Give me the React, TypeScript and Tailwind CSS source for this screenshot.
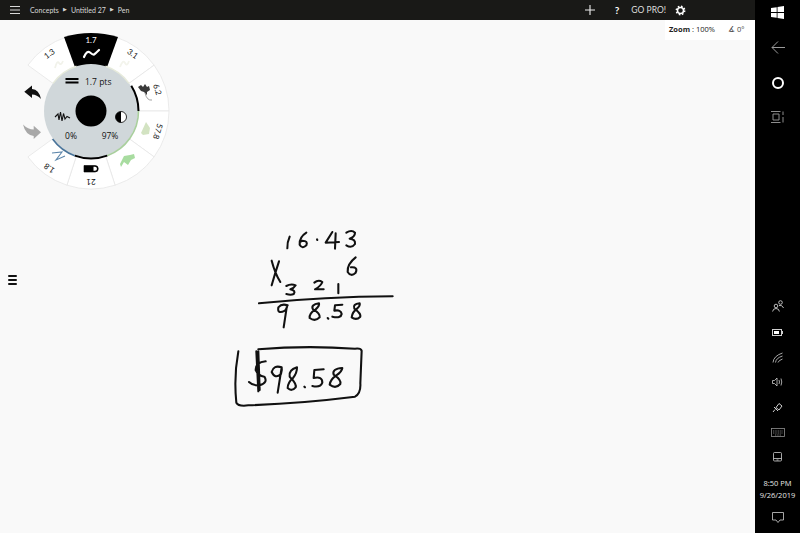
import React from "react";

const CX = 91;
const CY = 111;
const pt = (r: number, deg: number) => {
  const a = ((deg - 90) * Math.PI) / 180;
  return [CX + r * Math.cos(a), CY + r * Math.sin(a)];
};
const wedge = (r1: number, r2: number, a: number, b: number) => {
  const [x1, y1] = pt(r2, a);
  const [x2, y2] = pt(r2, b);
  const [x3, y3] = pt(r1, b);
  const [x4, y4] = pt(r1, a);
  return `M${x1} ${y1}A${r2} ${r2} 0 0 1 ${x2} ${y2}L${x3} ${y3}A${r1} ${r1} 0 0 0 ${x4} ${y4}Z`;
};
const arc = (r: number, a: number, b: number) => {
  const [x1, y1] = pt(r, a);
  const [x2, y2] = pt(r, b);
  return `M${x1} ${y1}A${r} ${r} 0 0 1 ${x2} ${y2}`;
};

function Label({ t, deg, r = 71, fill = "#111" }: { t: string; deg: number; r?: number; fill?: string }) {
  const [x, y] = pt(r, deg);
  return (
    <text x={x} y={y} fill={fill} fontSize="8" textAnchor="middle" dominantBaseline="central" transform={`rotate(${deg} ${x} ${y})`} fontFamily="Lato, sans-serif">
      {t}
    </text>
  );
}

function Wheel() {
  const segs = [-54, 18, 54, 90, 126, 162, 198];
  return (
    <svg className="absolute left-0 top-0" width="190" height="180" viewBox="0 20 190 180">
      {segs.map((a) => (
        <path key={a} d={wedge(46, 78, a, a + 36)} fill="#ffffff" stroke="#e6e6e6" strokeWidth="0.8" />
      ))}
      <path d="M64 37Q91 29 118 37L106 70H76Z" fill="#000" />
      <circle cx={CX} cy={CY} r="47" fill="#d0d7da" />
      <path d={arc(47, 18, 54)} fill="none" stroke="#e6eadb" strokeWidth="1.5" />
      <path d={arc(47, -54, -18)} fill="none" stroke="#e6eadb" strokeWidth="1.5" />
      <path d={arc(47.5, 58, 90)} fill="none" stroke="#000" strokeWidth="2" />
      <path d={arc(47.5, 90, 160)} fill="none" stroke="#a9cf9d" strokeWidth="1.6" />
      <path d={arc(47.5, 160, 200)} fill="none" stroke="#000" strokeWidth="2" />
      <path d={arc(47.5, 200, 234)} fill="none" stroke="#49749a" strokeWidth="1.6" />

      <Label t="1.7" deg={0} fill="#fff" />
      <Label t="1.3" deg={-36} />
      <Label t="3.1" deg={36} />
      <Label t="6.2" deg={72} r={70} />
      <Label t="57.8" deg={107} r={70} />
      <Label t="21" deg={180} />
      <Label t="1.8" deg={216} />

      {/* brush glyphs */}
      <path d="M84 57Q87 50 90 52.500T94 54.500T99 50" fill="none" stroke="#fff" strokeWidth="2.200" strokeLinecap="round" />
      <path d="M55 68Q57 60 59 63T63 61" fill="none" stroke="#f1f2ea" strokeWidth="1.800" />
      <path d="M120 67Q123 59 125 63T129 61" fill="none" stroke="#f3f4ec" strokeWidth="1.800" />
      <path d="M138 87L141 85L143 87L145 84L147 87L149 86L150 90L147 92L147 95L144 92L141 91Z" fill="#3a3a3a" />
      <path d="M145 93Q147 101 152 100" fill="none" stroke="#888" strokeWidth="0.800" />
      <path d="M141 133L146 122L150 128L149 134L143 135Z" fill="#d3e3c2" />
      <path d="M120 164L124 156L130 155L134 154L135 158L131 160L128 165L124 162L121 167Z" fill="#a8dca0" />
      <path d="M52 153L62 152L56 160L65 156" fill="none" stroke="#5c86ab" strokeWidth="1.100" />
      <path d="M84 165.500H95A3 3 0 0 1 95 172H84Z" fill="#000" stroke="#000" strokeWidth="0.600" />
      <path d="M93.500 166.800H95A1.900 1.900 0 0 1 95 170.700H93.500Z" fill="#fff" />

      {/* hub */}
      <rect x="65.500" y="78" width="13" height="2" fill="#000" />
      <rect x="65.500" y="81.500" width="13" height="2" fill="#000" />
      <text x="85" y="84.500" fontSize="8.500" fill="#111" fontFamily="Open Sans, sans-serif">1.7 pts</text>
      <circle cx={CX} cy={CY} r="15.500" fill="#000" />
      <path d="M55 117L58 114L59 120L60.500 112L62 121L63.500 113.500L65 119L67 116.500L70 118" fill="none" stroke="#111" strokeWidth="1.100" />
      <circle cx="121" cy="117" r="5.500" fill="#fff" stroke="#000" strokeWidth="0.800" />
      <path d="M121 111.500A5.500 5.500 0 0 0 121 122.500Z" fill="#000" />
      <text x="71" y="139" fontSize="8.500" fill="#111" textAnchor="middle" fontFamily="Open Sans, sans-serif">0%</text>
      <text x="110" y="139" fontSize="8.500" fill="#111" textAnchor="middle" fontFamily="Open Sans, sans-serif">97%</text>

      {/* undo, redo */}
      <path d="M24.300 91.700L32 85.500V89Q39 89.500 41 99Q37 94.500 32 94.500V98Z" fill="#111" />
      <path d="M41 132.300L33.700 125.700V129.500Q28 129.500 23 124.500Q25.500 135 33.700 136V139Z" fill="#a8a8a8" />
    </svg>
  );
}

function Ink() {
  return (
    <svg className="absolute left-[225px] top-[200px]" width="180" height="195" viewBox="0 0 540 585" fill="none" stroke="#111" strokeWidth="6.200" strokeLinecap="round" strokeLinejoin="round">
      <path d="M194 50Q186 68 187 85" />
      <path d="M244 38Q222 52 224 74Q232 88 244 76Q250 62 232 62L225 66" />
      <path d="M276 58L277 60" />
      <path d="M322 36L302 68L342 66M332 40L330 86" />
      <path d="M364 38Q380 28 390 38Q390 50 374 56Q392 58 390 72Q380 86 364 76" />
      <path d="M140 122Q150 160 166 186M162 124Q150 160 140 196" />
      <path d="M392 112Q366 132 368 156Q378 172 392 158Q400 140 378 142" />
      <path d="M184 198Q198 190 212 196Q206 206 196 208Q214 212 206 222Q198 226 184 222" />
      <path d="M268 188Q280 178 292 186Q288 198 270 208L296 208" />
      <path d="M340 192L340 220" />
      <path d="M102 250Q300 230 503 229" />
      <path d="M188 256Q170 250 160 262Q156 284 180 272Q188 262 186 256L176 322" />
      <path d="M282 250Q256 254 264 268Q286 280 284 292Q270 306 254 294Q252 280 272 268Q284 258 282 250Z" />
      <path d="M308 294L310 296" />
      <path d="M352 254L330 256L328 272Q348 268 350 282Q348 296 322 290" />
      <path d="M404 250Q382 252 388 266Q408 280 406 290Q394 302 380 292Q382 276 396 266Q406 258 404 250Z" />
      <path d="M40 394Q26 470 34 548Q40 560 70 556Q230 550 390 530Q408 520 406 490L410 392Q408 384 390 386Q240 376 100 388" />
      <path d="M122 424Q92 426 92 450Q100 468 118 470Q130 488 104 496Q84 498 72 486M94 394L100 514M100 394L104 510" />
      <path d="M170 442Q146 434 140 456Q150 478 168 462Q172 450 170 442L158 518" />
      <path d="M216 442Q190 450 194 470Q216 492 212 502Q200 516 188 504Q188 488 204 474Q216 460 216 442Z" />
      <path d="M238 500L240 502" />
      <path d="M296 448L268 450L266 474Q292 468 292 488Q286 504 262 498" />
      <path d="M352 444Q320 446 326 464Q350 480 346 492Q332 508 314 494Q316 478 334 466Q350 456 352 444Z" />
    </svg>
  );
}

const S = "#cfcfcf";

function Sidebar() {
  return (
    <aside className="flex h-[533px] w-[45px] shrink-0 flex-col items-center bg-black pt-[6px] pb-[10px] text-[#e6e6e6]">
      <svg width="13" height="13" viewBox="0 0 13 13" fill="#fff"><path d="M0 2L5.700 1.200V6H0ZM6.500 1L13 0V6H6.500ZM0 6.900H5.700V11.800L0 11ZM6.500 6.900H13V13L6.500 12Z" /></svg>
      <svg className="mt-[22px]" width="14" height="13" viewBox="0 0 14 13" fill="none" stroke="#9b9b9b"><path d="M14 6.500H1M7 .5L1 6.500L7 12.500" /></svg>
      <span className="mt-[23px] h-[12px] w-[12px] rounded-full border-2 border-white" />
      <svg className="mt-[22px]" width="14" height="12" viewBox="0 0 14 12" fill="none" stroke="#8d8d8d"><path d="M0 .5H9.500M0 11.500H9.500M2 3H8V9H2ZM12 .5V4M12 6V11.500" /></svg>
      <div className="flex-1" />
      <svg width="12" height="12" viewBox="0 0 12 12" fill="none" stroke={S} strokeWidth="0.900"><circle cx="4" cy="6" r="1.800" /><path d="M.6 11.500Q1 8.500 4 8.500T7.400 11.500" /><circle cx="8.500" cy="2.500" r="1.800" /><path d="M7 5.500Q10 4.500 11.600 8" /></svg>
      <svg className="mt-[17px]" width="11" height="7" viewBox="0 0 11 7"><rect x=".5" y=".5" width="9" height="6" fill="none" stroke={S} /><rect x="2" y="2" width="5" height="3" fill="#fff" /><rect x="10" y="2" width="1" height="3" fill={S} /></svg>
      <svg className="mt-[16px]" width="11" height="11" viewBox="0 0 11 11" fill="none" stroke={S} strokeWidth="0.800"><path d="M1 10.500Q1.500 4 10.500 1M3.500 10.500Q4 6 10.500 4M6 10.500Q6.500 8.500 10.500 7" /></svg>
      <svg className="mt-[14px]" width="11" height="10" viewBox="0 0 11 10" fill="none" stroke={S} strokeWidth="0.800"><path d="M.5 3.500H2.500L5 1V9L2.500 6.500H.5ZM7 3Q8 5 7 7M9 1.500Q10.500 5 9 8.500" /></svg>
      <svg className="mt-[15px]" width="11" height="11" viewBox="0 0 11 11" fill="none" stroke={S} strokeWidth="1"><path d="M1 10L3 7.500M4 5.500L7 8L10 4L7 1.500ZM2 5L6 9" /></svg>
      <svg className="mt-[15px]" width="14" height="9" viewBox="0 0 14 9" fill="none" stroke="#8f8f8f" strokeWidth="0.800"><rect x=".5" y=".5" width="13" height="8" /><path d="M2 3H12M2 5H12M4 7H10" strokeDasharray="1 .7" /></svg>
      <svg className="mt-[15px]" width="9" height="10" viewBox="0 0 9 10" fill="none" stroke={S} strokeWidth="0.800"><rect x=".5" y=".5" width="8" height="8.500" rx="1" /><path d="M.5 6.500H8.500M3.500 8H5.500" /></svg>
      <span className="mt-[15px] text-[7.500px] leading-[12px] [font-family:'Open_Sans',sans-serif]">8:50 PM</span>
      <span className="text-[7.500px] leading-[12px] [font-family:'Open_Sans',sans-serif]">9/26/2019</span>
      <svg className="mt-[11px]" width="12" height="11" viewBox="0 0 12 11" fill="none" stroke={S} strokeWidth="0.800"><path d="M.5 .5H11.500V8H8L6 10.500L4 8H.5Z" /></svg>
    </aside>
  );
}

export default function App() {
  return (
    <div className="flex h-[533px] w-[800px] overflow-hidden [font-family:'Open_Sans',sans-serif]">
      <main className="flex w-[755px] flex-col">
        <header className="flex h-5 shrink-0 items-center bg-[#191917] pr-[69px] text-[7px] text-[#d8d8d8] [font-family:Lato,sans-serif]">
          <svg className="ml-[10px]" width="10" height="8" viewBox="0 0 10 8" fill="#d8d8d8"><rect width="10" height="1" /><rect y="3.500" width="10" height="1" /><rect y="7" width="10" height="1" /></svg>
          <span className="ml-[10px]">Concepts</span>
          <span className="ml-[4px] text-[5px]">▶</span>
          <span className="ml-[4px]">Untitled 27</span>
          <span className="ml-[4px] text-[5px]">▶</span>
          <span className="ml-[4px]">Pen</span>
          <svg className="ml-auto" width="10" height="10" viewBox="0 0 10 10" stroke="#eee" strokeWidth="1.100"><path d="M5 0V10M0 5H10" /></svg>
          <span className="ml-[20px] text-[10px] font-bold text-white">?</span>
          <span className="ml-[12px] text-[8.500px] text-[#dedede]">GO PRO!</span>
          <svg className="ml-[9px]" width="11" height="11" viewBox="0 0 11 11" fill="none" stroke="#fff"><circle cx="5.500" cy="5.500" r="3" strokeWidth="1.500" /><circle cx="5.500" cy="5.500" r="4.200" strokeWidth="1.500" strokeDasharray="1.600 1.700" /></svg>
        </header>
        <section className="relative flex-1 bg-[#f9f9f9]">
          <div className="absolute right-0 top-0 flex h-5 w-[90px] items-center bg-white pl-[4px] text-[7.500px] text-[#222]">
            <b>Zoom</b><span className="ml-[2px]">: 100%</span><span className="ml-[13px] text-[#444]">∡ 0°</span>
          </div>
          <svg className="absolute left-[8px] top-[255px]" width="9" height="10" viewBox="0 0 9 10" fill="#111"><rect y="0" width="9" height="2" rx="1" /><rect y="4" width="9" height="2" rx="1" /><rect y="8" width="9" height="2" rx="1" /></svg>
          <div className="absolute left-0 top-0 h-[180px] w-[190px]"><Wheel /></div>
          <Ink />
        </section>
      </main>
      <Sidebar />
    </div>
  );
}
